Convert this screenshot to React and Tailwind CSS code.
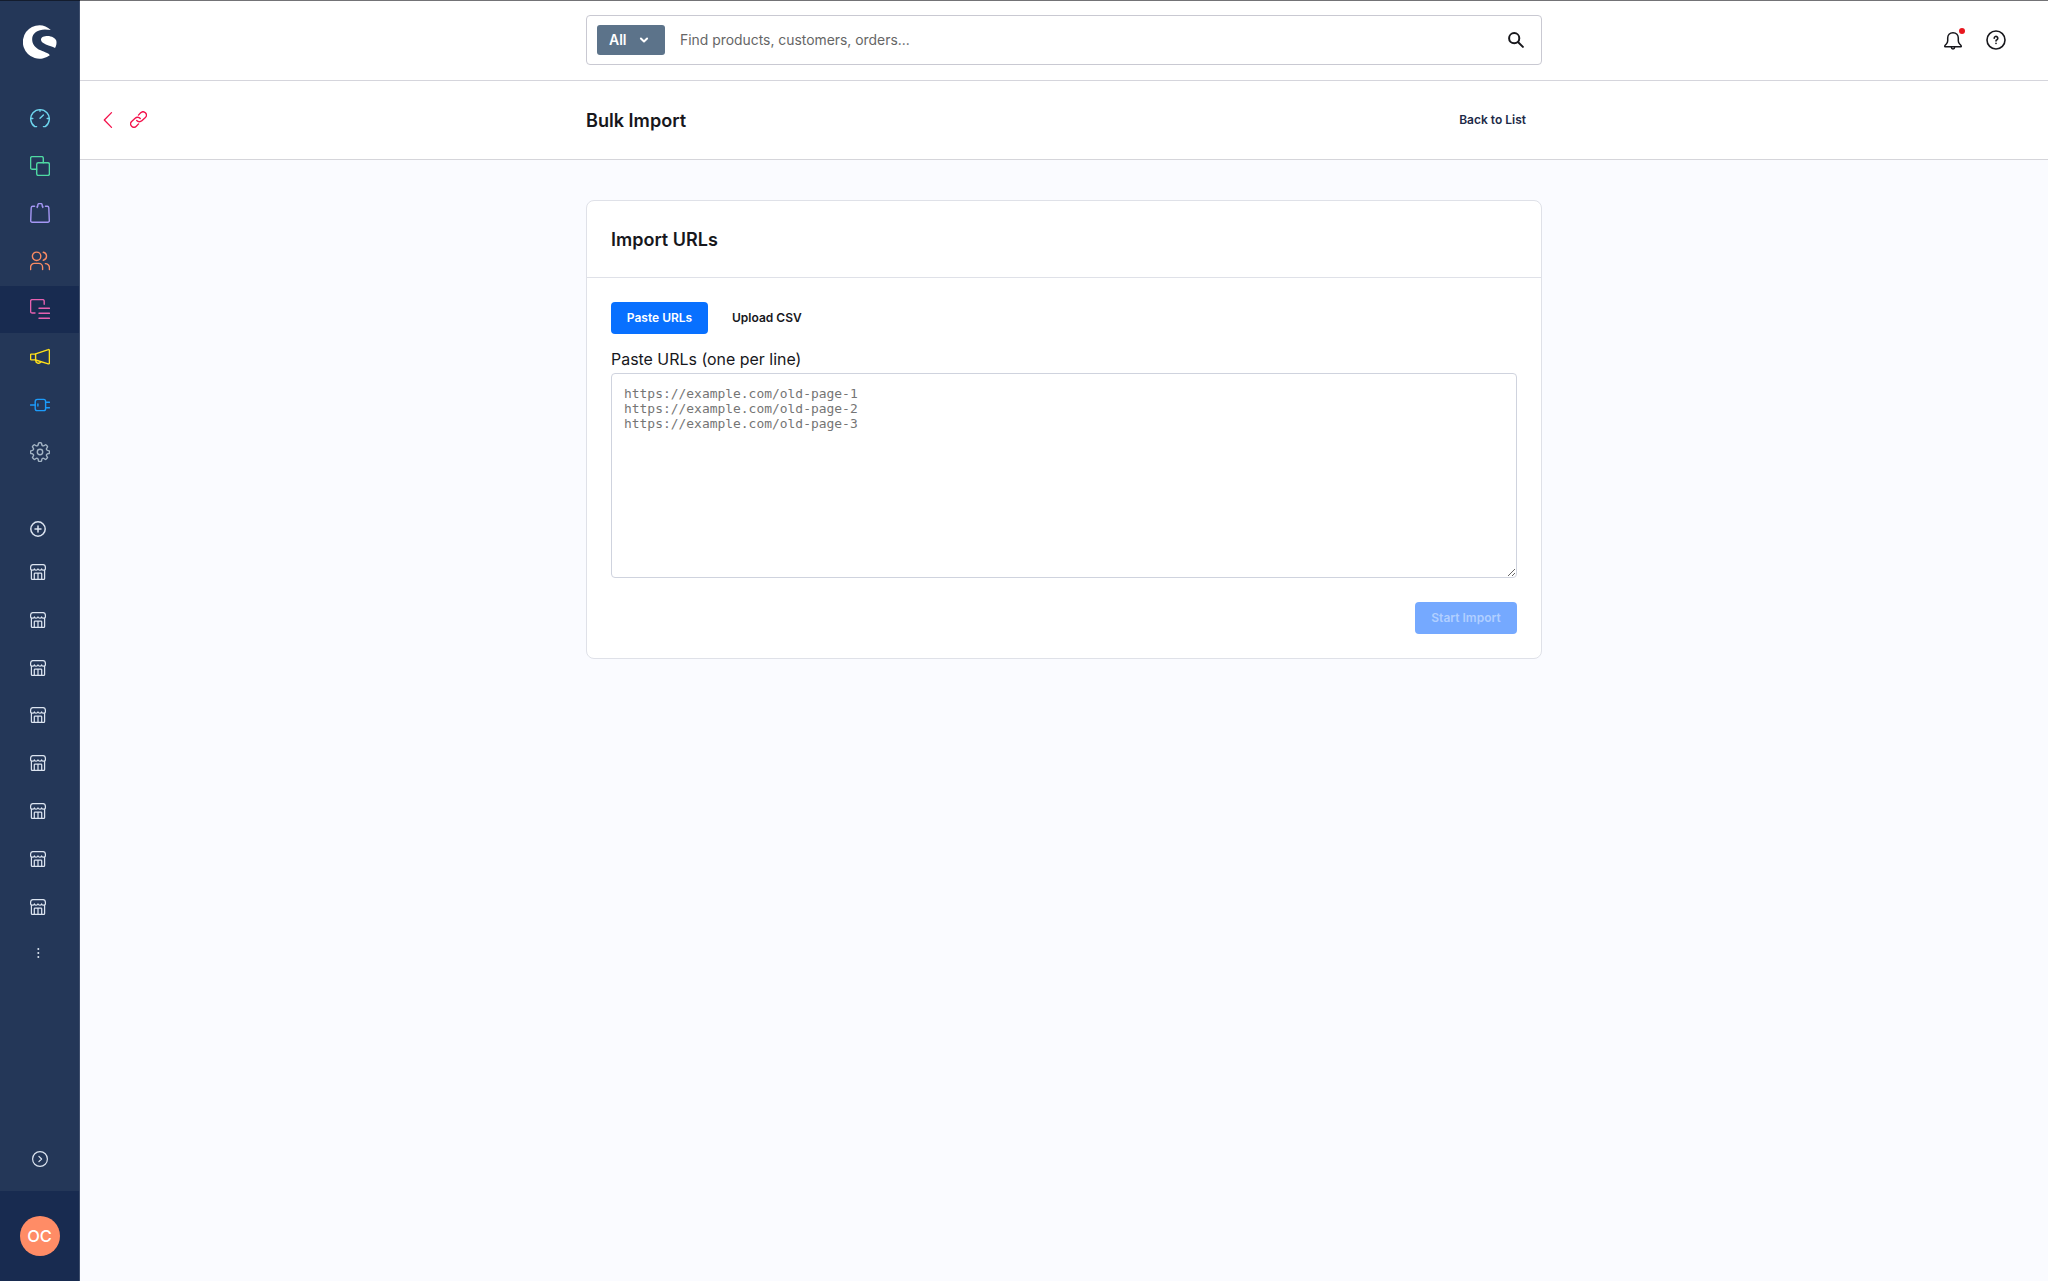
import { useState } from "react";

const Icon = ({ size = 20, sw = 1.4, children }) => (
  <svg
    width={size}
    height={size}
    viewBox={`0 0 ${size} ${size}`}
    fill="none"
    stroke="currentColor"
    strokeWidth={sw}
    strokeLinecap="round"
    strokeLinejoin="round"
  >
    {children}
  </svg>
);

const menu = [
  {
    name: "dashboard",
    color: "text-[#6ed5ee]",
    icon: (
      <Icon>
        <path d="M6.6 18.6H4.8A9.3 9.3 0 1 1 15.2 18.6H13.4" />
        <path d="M10 1.6v1.6M.9 10.5h1.900M17.200 10.5h1.900M10 10.300l3.400-3.400" />
      </Icon>
    ),
  },
  {
    name: "catalogues",
    color: "text-[#4fd9a3]",
    icon: (
      <Icon>
        <rect x="6.7" y="6.7" width="12.7" height="12.7" rx="1.6" />
        <path d="M6.7 13.3H2.2A1.6 1.6 0 0 1 .6 11.7V2.2A1.6 1.6 0 0 1 2.2.6h9.5a1.6 1.6 0 0 1 1.6 1.6v4.5" />
      </Icon>
    ),
  },
  {
    name: "orders",
    color: "text-[#a597f5]",
    icon: (
      <Icon>
        <path d="M4.6 3.3H2.7a1.5 1.5 0 0 0-1.5 1.4L.7 17.7a1.5 1.5 0 0 0 1.5 1.6h15.6a1.5 1.5 0 0 0 1.5-1.6L18.8 4.7a1.5 1.5 0 0 0-1.5-1.4h-1.9" />
        <path d="M7.2 4.5V3.3h.6V1.9A1.3 1.3 0 0 1 9.1.6h1.8a1.3 1.3 0 0 1 1.3 1.3v1.4h.6v1.2" />
      </Icon>
    ),
  },
  {
    name: "customers",
    color: "text-[#f98a63]",
    icon: (
      <Icon>
        <circle cx="6.6" cy="5.3" r="4.2" />
        <path d="M.6 18.6v-2.4a3.8 3.8 0 0 1 3.8-3.8h4.4a3.8 3.8 0 0 1 3.8 3.8v2.4" />
        <path d="M13.3 1.3a4.1 4.1 0 0 1 0 8M15.3 12.6a4 4 0 0 1 4.1 4v2" />
      </Icon>
    ),
  },
  {
    name: "content",
    color: "text-[#e661b0]",
    icon: (
      <Icon>
        <path d="M5 14H2.2A1.6 1.6 0 0 1 .6 12.4V2.2A1.6 1.6 0 0 1 2.2.6h10.4a1.6 1.6 0 0 1 1.6 1.6v3" />
        <path d="M9 9.2h10.4M9 14.2h10.4M9 19.2h10.4" />
      </Icon>
    ),
  },
  {
    name: "marketing",
    color: "text-[#ffe01a]",
    icon: (
      <Icon>
        <path d="M5.6 6.9L18.3 2.6a.8.8 0 0 1 1.1.8v12.6a.8.8 0 0 1-1.1.8L5.6 13z" />
        <path d="M5.6 7.1H1.3a.7.7 0 0 0-.7.7v4.4a.7.7 0 0 0 .7.7h4.3M5.8 13.2a2.7 2.7 0 0 0 5 1.7" />
      </Icon>
    ),
  },
  {
    name: "extensions",
    color: "text-[#1c9cfb]",
    icon: (
      <Icon>
        <path d="M5.2 6.6c0-1.4.8-2.2 2.2-2.2h6.3c1.2 0 1.9.7 1.9 1.9v7.4c0 1.2-.7 1.9-1.9 1.9H7.4c-1.4 0-2.2-.8-2.2-2.2z" />
        <path d="M.6 10h4.6M7.9 9v2M15.6 7.3h3.8M15.6 12.7h3.8" />
      </Icon>
    ),
  },
  {
    name: "settings",
    color: "text-[#a3b4c4]",
    icon: (
      <Icon>
        <circle cx="10" cy="10" r="2.7" />
        <path d="M8.4 1.6a.9.9 0 0 1 .9-.9h1.4a.9.9 0 0 1 .9.9l.2 1.2a1.5 1.5 0 0 0 2.2.9l1-.7a.9.9 0 0 1 1.2.1l1 1a.9.9 0 0 1 .1 1.2l-.7 1a1.5 1.5 0 0 0 .9 2.1l1.1.2a.9.9 0 0 1 .8.9v1.2a.9.9 0 0 1-.8.9l-1.1.2a1.5 1.5 0 0 0-.9 2.1l.7 1a.9.9 0 0 1-.1 1.2l-1 1a.9.9 0 0 1-1.2.1l-1-.7a1.5 1.5 0 0 0-2.2.9l-.2 1.2a.9.9 0 0 1-.9.8H9.3a.9.9 0 0 1-.9-.8l-.2-1.2a1.5 1.5 0 0 0-2.2-.9l-1 .7a.9.9 0 0 1-1.2-.1l-1-1a.9.9 0 0 1-.1-1.2l.7-1a1.5 1.5 0 0 0-.9-2.1l-1.1-.2a.9.9 0 0 1-.8-.9V9.5a.9.9 0 0 1 .8-.9l1.1-.2a1.5 1.5 0 0 0 .9-2.1l-.7-1a.9.9 0 0 1 .1-1.2l1-1A.9.9 0 0 1 5 3l1 .7a1.5 1.5 0 0 0 2.2-.9z" />
      </Icon>
    ),
  },
];

const channels = [1, 2, 3, 4, 5, 6, 7, 8];

const StoreIcon = () => (
  <Icon size={16} sw={1.25}>
    <path d="M3 .6h10c1.4 0 2.4 1.1 2.4 2.7v1.1a1.7 1.7 0 0 1-1.9 1.8 2.1 2.1 0 0 1-1.9-1.3A2.1 2.1 0 0 1 9.8 6.2 2 2 0 0 1 8 4.9a2 2 0 0 1-1.8 1.3 2.1 2.1 0 0 1-1.8-1.3 2.1 2.1 0 0 1-1.9 1.3A1.7 1.7 0 0 1 .6 4.4V3.3C.6 1.7 1.6.6 3 .6z" />
    <path d="M1.4 6.3v8.3c0 .5.3.8.8.8h11.6c.5 0 .8-.3.8-.8V6.3" />
    <path d="M4.3 15.2V9.8c0-.5.3-.8.8-.8h5.8c.5 0 .8.3.8.8v5.4M8 9v6.2" />
  </Icon>
);

const Logo = () => (
  <svg width="34" height="34" viewBox="68 73.5 104 104" fill="#fff">
    <path d="M153 89C143 79 131 74 119 74A51.3 51.3 0 1 0 150 166C147 160 135 157 122 151C105 143 96 132 96 116C96 98 114 87 135 87C142 87 148 88 153 89Z" />
    <path d="M123 118C123 110 133 107 143 107C156 107 168 114 170 122C171.5 130 170 138 166 144C158 139 149 137 138 133C128 129 123 124 123 118Z" />
  </svg>
);

const Sidebar = () => (
  <aside className="flex w-20 shrink-0 flex-col border-r border-[#3f4f6d] bg-[#243758]">
    <div className="flex h-[93.4px] shrink-0 justify-center pt-[24px] pl-px">
      <Logo />
    </div>
    <nav>
      {menu.map((item) => (
        <a
          key={item.name}
          className={`flex h-[47.8px] items-center justify-center pb-px ${item.color} ${
            item.name === "content" ? "bg-[#182b50]" : ""
          }`}
        >
          {item.icon}
        </a>
      ))}
    </nav>
    <div className="mt-[44.3px] flex flex-col pl-[30px] text-[#dce4f0]">
      <Icon size={16} sw={1.5}>
        <circle cx="8" cy="8" r="7.2" />
        <path d="M8 5v6M5 8h6" />
      </Icon>
      <div className="mt-[11px]">
        {channels.map((c) => (
          <div key={c} className="flex h-[47.8px] items-center">
            <StoreIcon />
          </div>
        ))}
      </div>
      <svg width="16" height="16" viewBox="0 0 16 16" fill="currentColor" className="mt-[15px]">
        <circle cx="8.3" cy="4" r="1" />
        <circle cx="8.3" cy="8" r="1" />
        <circle cx="8.3" cy="12" r="1" />
      </svg>
    </div>
    <div className="mt-auto mb-[24.5px] flex justify-center text-[#dce4f0]">
      <Icon size={16} sw={1.2}>
        <circle cx="8" cy="8" r="7.4" />
        <path d="M6.9 5.3L9.6 8l-2.7 2.7" />
      </Icon>
    </div>
    <div className="flex h-[90px] shrink-0 justify-center bg-[#182b50] pt-[25px]">
      <div className="flex size-10 items-center justify-center rounded-full bg-[#ff8c66] text-[16.5px] font-medium text-white">
        OC
      </div>
    </div>
  </aside>
);

const TopBar = () => (
  <header className="flex h-[80px] items-center justify-between border-b border-[#d5d5dc] bg-white pb-px">
    <div className="w-[506px]" />
    <div className="flex h-[50px] w-[956px] items-center rounded border border-[#c9c9d2] pr-[17px] pl-[10px]">
      <button className="flex h-[30px] w-[68px] items-center rounded-[3px] bg-[#5c738a] pl-3 text-sm font-semibold text-white">
        All
        <svg
          width="10"
          height="8"
          viewBox="0 0 10 8"
          fill="none"
          stroke="#fff"
          strokeWidth="2"
          strokeLinecap="round"
          strokeLinejoin="round"
          className="ml-[12px]"
        >
          <path d="M1.9 2.5L5 5.5l3.1-3" />
        </svg>
      </button>
      <span className="ml-[15px] flex-1 text-[13.9px] text-[#666]">
        Find products, customers, orders...
      </span>
      <svg
        width="16"
        height="16"
        viewBox="0 0 16 16"
        fill="none"
        stroke="#17171c"
        strokeWidth="2"
        strokeLinecap="round"
        className="mb-px"
      >
        <circle cx="6.2" cy="6.2" r="5.1" />
        <path d="M10.2 10.2l4.7 4.7" />
      </svg>
    </div>
    <div className="flex w-[506px] items-center justify-end gap-[23px] pr-[42px] text-[#17171c]">
      <div className="relative h-5 w-5">
        <Icon sw={1.5}>
          <path d="M10 2.7c-3.3 0-5.3 2.3-5.3 5.3v2.7c0 1.5-.5 2.3-1.4 3.3-.8.8-1.6 1.3-1.6 2.2 0 .3.2.5.5.5h15.6c.3 0 .5-.2.5-.5 0-.9-.8-1.4-1.6-2.2-.9-1-1.4-1.8-1.4-3.3V8c0-3-2-5.3-5.3-5.3z" />
          <path d="M8.4 17.3a1.6 1.6 0 0 0 3.2 0" />
        </Icon>
        <span className="absolute top-[-2px] right-[-2px] size-[6px] rounded-full bg-[#e8171f]" />
      </div>
      <Icon sw={1.6}>
        <circle cx="10" cy="10" r="9" />
        <path d="M8.2 8.2a1.8 1.8 0 1 1 2.7 1.6c-.6.3-.9.7-.9 1.2" />
        <path d="M10 13.3v.1" />
      </Icon>
    </div>
  </header>
);

const PageHeader = () => (
  <div className="flex h-[79px] items-center justify-between border-b border-[#d5d5da] bg-white">
    <div className="flex w-[506px] items-center gap-[17px] pb-px pl-[22.5px] text-[#f3114b]">
      <svg
        width="10"
        height="18"
        viewBox="0 0 10 18"
        fill="none"
        stroke="currentColor"
        strokeWidth="1.3"
        strokeLinecap="round"
        strokeLinejoin="round"
      >
        <path d="M8.5 1.6L1.3 9l7.2 7.4" />
      </svg>
      <svg
        width="17"
        height="17"
        viewBox="0 0 24 24"
        fill="none"
        stroke="currentColor"
        strokeWidth="1.9"
        strokeLinecap="round"
        strokeLinejoin="round"
      >
        <path d="M9.5 13.5a5 5 0 0 0 7.2.4l5-4.7a4.5 4.5 0 0 0-6.6-6.6l-3.2 3.2" />
        <path d="M14.5 10.5a5 5 0 0 0-7.2-.4l-5 4.7a4.5 4.5 0 0 0 6.6 6.6l3.2-3.2" />
      </svg>
    </div>
    <div className="flex w-[956px] items-center justify-between pr-[16px] pb-px">
      <h1 className="text-[18.1px] leading-7 font-semibold text-[#17171c]">Bulk Import</h1>
      <button className="text-xs font-semibold text-[#1d2a47]">Back to List</button>
    </div>
    <div className="w-[506px]" />
  </div>
);

const ImportCard = () => {
  const [tab, setTab] = useState("paste");
  const [urls, setUrls] = useState("");

  return (
    <div className="mx-auto mt-[40px] w-[956px] rounded-lg border border-[#dfe1e8] bg-white">
      <div className="flex h-[77px] items-center border-b border-[#dfe1e8] px-6 pt-px">
        <h2 className="text-lg font-semibold text-[#17171c]">Import URLs</h2>
      </div>
      <div className="flex flex-col px-6 pt-6 pb-6">
        <div className="flex">
          <button
            className="h-8 w-[97px] rounded bg-[#0870ff] text-xs font-semibold text-white"
            onClick={() => setTab("paste")}
          >
            Paste URLs
          </button>
          <button
            className="ml-2 h-8 px-4 text-xs font-semibold text-[#17171c]"
            onClick={() => setTab("csv")}
          >
            Upload CSV
          </button>
        </div>
        {tab === "paste" && (
          <>
            <label className="mt-[14px] text-[15.95px] leading-[24px] text-[#17171c]">
              Paste URLs (one per line)
            </label>
            <textarea
              className="mt-px h-[205px] w-full rounded border border-[#cfd3de] px-3 py-[12px] font-['DejaVu_Sans_Mono',monospace] text-[12.95px] leading-[15px] placeholder:text-[#757575]"
              placeholder={
                "https://example.com/old-page-1\nhttps://example.com/old-page-2\nhttps://example.com/old-page-3"
              }
              value={urls}
              onChange={(e) => setUrls(e.target.value)}
            />
          </>
        )}
        <button className="mt-6 h-8 w-[102px] self-end rounded bg-[#75a9ff] text-xs font-semibold text-[#b1cfff]">
          Start Import
        </button>
      </div>
    </div>
  );
};

export default function App() {
  return (
    <div className="flex h-screen flex-col overflow-hidden bg-[#fafbff] font-['Inter',sans-serif]">
      <div className="flex h-px shrink-0">
        <div className="w-20 bg-[#131c2d]" />
        <div className="flex-1 bg-[#737376]" />
      </div>
      <div className="flex min-h-0 flex-1">
        <Sidebar />
        <main className="flex-1">
          <TopBar />
          <PageHeader />
          <ImportCard />
        </main>
      </div>
    </div>
  );
}
